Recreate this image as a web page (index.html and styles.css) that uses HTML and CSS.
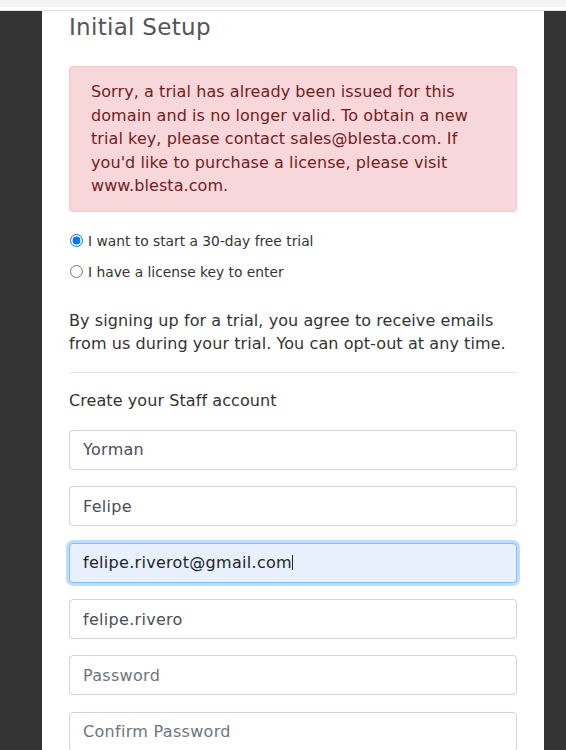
FILE: index.html
```html
<!DOCTYPE html>
<html>
<head>
<meta charset="utf-8">
<link rel="stylesheet" href="styles.css">
</head>
<body>
<div class="topbar"></div>
<div class="topgap"></div>
<div class="stage">
  <div class="panel">
    <h1 class="title">Initial Setup</h1>
    <div class="alert">Sorry, a trial has already been issued for this domain and is no longer valid. To obtain a new trial key, please contact sales@blesta.com. If you'd like to purchase a license, please visit www.blesta.com.</div>
    <div class="radios">
      <label class="radio"><input type="radio" name="t" checked><span>I want to start a 30-day free trial</span></label>
      <label class="radio"><input type="radio" name="t"><span>I have a license key to enter</span></label>
    </div>
    <p class="note">By signing up for a trial, you agree to receive emails from us during your trial. You can opt-out at any time.</p>
    <hr class="rule">
    <div class="section">Create your Staff account</div>
    <input class="field" type="text" value="Yorman">
    <input class="field" type="text" value="Felipe">
    <div class="field focused"><span class="val">felipe.riverot@gmail.com</span><span class="caret"></span></div>
    <input class="field" type="text" value="felipe.rivero">
    <input class="field" type="password" placeholder="Password">
    <input class="field" type="password" placeholder="Confirm Password">
  </div>
</div>
</body>
</html>
```

FILE: styles.css
```css
html, body {
  margin: 0;
  padding: 0;
}
body {
  background: #333333;
  font-family: "DejaVu Sans", Verdana, sans-serif;
  color: #333;
  height: 750px;
  overflow: hidden;
}
.topbar {
  height: 7px;
  background: #f1f2f4;
}
.topgap {
  height: 3px;
  background: #ffffff;
  border-bottom: 1px solid #e3e3e3;
}
.stage {
  padding-left: 42px;
}
.panel {
  width: 448px;
  background: #ffffff;
  padding: 2px 27px 40px 27px;
  min-height: 760px;
}
.title {
  margin: 0 0 25px 0;
  font-size: 23px;
  letter-spacing: 0.3px;
  font-weight: normal;
  line-height: 28px;
  color: #555555;
}
.alert {
  background: #f8d7da;
  border: 1px solid #f5c6cb;
  border-radius: 4px;
  color: #721c24;
  font-size: 16px;
  letter-spacing: 0.08px;
  line-height: 23.6px;
  padding: 13px 21px 13px 21px;
}
.radios {
  margin-top: 20px;
  display: flex;
  flex-direction: column;
  gap: 13px;
}
.radio {
  display: flex;
  align-items: center;
  gap: 5px;
  font-size: 13.8px;
  line-height: 18px;
  color: #333;
}
.radio input {
  margin: 0 0 0 1px;
  width: 13px;
  height: 13px;
}
.note {
  margin: 27.6px 0 0 0;
  font-size: 16px;
  letter-spacing: 0.08px;
  line-height: 23.6px;
  color: #333;
}
.rule {
  border: 0;
  border-top: 1px solid #e5e5e5;
  margin: 16.5px 0 0 0;
}
.section {
  margin-top: 16px;
  font-size: 16px;
  letter-spacing: 0.08px;
  line-height: 23.6px;
  color: #333;
  margin-bottom: 17px;
}
.field {
  display: block;
  box-sizing: border-box;
  width: 448px;
  height: 40px;
  margin: 0 0 16.4px 0;
  padding: 0 13px;
  border: 1px solid #ced4da;
  border-radius: 4px;
  background: #fff;
  font-family: "DejaVu Sans", Verdana, sans-serif;
  font-size: 16px;
  letter-spacing: 0.3px;
  color: #495057;
  outline: none;
}
.field::placeholder {
  color: #6c757d;
}
.focused {
  display: flex;
  align-items: center;
  background: #e8f0fe;
  border-color: #80bdff;
  box-shadow: 0 0 0 3px rgba(0, 123, 255, 0.25);
  color: #212529;
}
.caret {
  display: inline-block;
  width: 1px;
  height: 15px;
  background: #222;
  margin-left: 0;
}
```
